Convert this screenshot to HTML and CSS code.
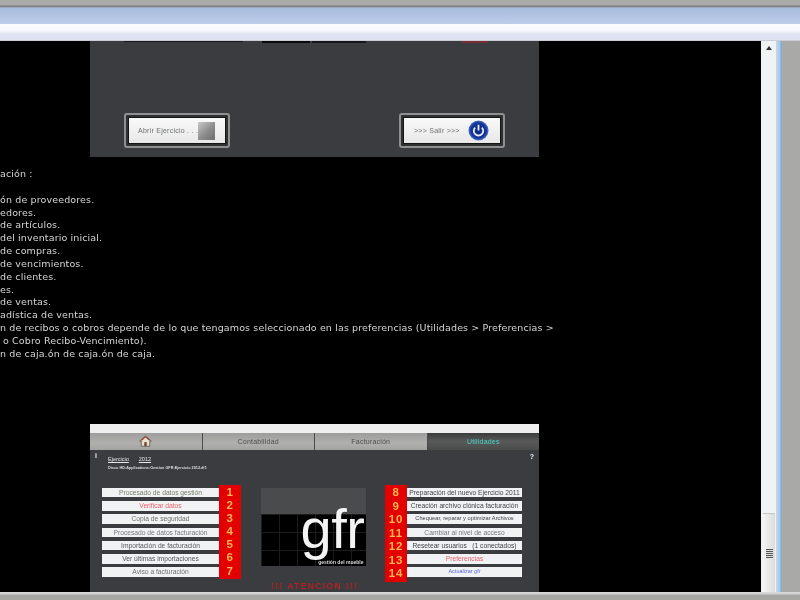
FILE: index.html
```html
<!DOCTYPE html>
<html lang="es">
<head>
<meta charset="utf-8">
<title>gfr</title>
<link rel="stylesheet" href="styles.css">
</head>
<body>
<div class="app">
  <div class="chrome-top"></div>
  <div class="toolbar-blue"></div>
  <div class="toolbar-white"></div>
  <div class="middle">
    <main class="viewport">
      <section class="shot shot-one">
        <div class="residue">
          <span class="res res-a"></span><span class="res res-b"></span><span class="res res-c"></span><span class="res res-d"></span>
        </div>
        <div class="shot-actions">
          <div class="big-btn">
            <div class="big-inner"><span>Abrir Ejercicio . . .</span><i class="cube"></i></div>
          </div>
          <div class="big-btn">
            <div class="big-inner big-exit"><span>&gt;&gt;&gt; Salir &gt;&gt;&gt;</span>
              <svg class="power" viewBox="0 0 24 24" aria-hidden="true">
                <defs><radialGradient id="pw" cx="50%" cy="50%" r="55%"><stop offset="0" stop-color="#0d2a7a"/><stop offset=".7" stop-color="#16379a"/><stop offset="1" stop-color="#6f95e0"/></radialGradient></defs>
                <circle cx="12" cy="12" r="11.5" fill="url(#pw)"/>
                <path d="M8.2 8.6a5.4 5.4 0 1 0 7.6 0" fill="none" stroke="#e8eefc" stroke-width="2"/>
                <path d="M12 5.5v6.5" stroke="#e8eefc" stroke-width="2"/>
              </svg>
            </div>
          </div>
        </div>
      </section>

      <div class="notes">
        <p>ación :</p>
        <p>&nbsp;</p>
        <p>ón de proveedores.</p>
        <p>edores.</p>
        <p>de artículos.</p>
        <p>del inventario inicial.</p>
        <p>de compras.</p>
        <p>de vencimientos.</p>
        <p>de clientes.</p>
        <p>es.</p>
        <p>de ventas.</p>
        <p>adística de ventas.</p>
        <p>n de recibos o cobros depende de lo que tengamos seleccionado en las preferencias (Utilidades &gt; Preferencias &gt;</p>
        <p class="ind">o Cobro Recibo-Vencimiento).</p>
        <p>n de caja.ón de caja.ón de caja.</p>
      </div>

      <section class="shot shot-two">
        <div class="titlebar"></div>
        <nav class="tabs">
          <div class="tab">
            <svg class="home" viewBox="0 0 16 14" aria-hidden="true">
              <path d="M8 .8 .8 7h2v6.4h10.4V7h2z" fill="#e9e2d2" stroke="#5b4a3a" stroke-width=".9"/>
              <path d="M3 6.2 8 2l5 4.2" fill="none" stroke="#9a3b25" stroke-width="1.4"/>
              <rect x="6.5" y="8.4" width="3" height="5" fill="#6b4a30"/>
            </svg>
          </div>
          <div class="tab">Contabilidad</div>
          <div class="tab">Facturación</div>
          <div class="tab tab-active">Utilidades</div>
        </nav>
        <div class="util">
          <div class="util-head">
            <span class="info">i</span>
            <div class="meta">
              <div class="meta-year"><u>Ejercicio</u><u>2012</u></div>
              <div class="meta-path">Disco HD:Applications:Gestion GFR:Ejercicio 2012.df1</div>
            </div>
            <span class="help">?</span>
          </div>
          <div class="util-grid">
            <div class="col-left">
              <div class="rows">
                <div class="row t-green">Procesado de datos gestión</div>
                <div class="row t-red">Verificar datos</div>
                <div class="row t-grey">Copia de seguridad</div>
                <div class="row t-slate">Procesado de datos facturación</div>
                <div class="row t-dark">Importación de facturación</div>
                <div class="row t-dark">Ver últimas importaciones</div>
                <div class="row t-grey">Aviso a facturación</div>
              </div>
              <div class="nums">
                <b>1</b><b>2</b><b>3</b><b>4</b><b>5</b><b>6</b><b>7</b>
              </div>
            </div>
            <div class="logo">
              <div class="logo-top"></div>
              <div class="logo-bottom"><small>gestión del mueble</small></div>
              <div class="logo-word">gfr</div>
            </div>
            <div class="col-right">
              <div class="nums nums-r">
                <b>8</b><b>9</b><b>10</b><b>11</b><b>12</b><b>13</b><b>14</b>
              </div>
              <div class="rows rows-r">
                <div class="row t-ink">Preparación del nuevo Ejercicio 2011</div>
                <div class="row t-ink">Creación archivo clónica facturación</div>
                <div class="row t-ink t-tiny">Chequear, reparar y optimizar Archivos</div>
                <div class="row t-slate">Cambiar al nivel de acceso</div>
                <div class="row t-ink">Resetear usuarios &nbsp; (1 conectados)</div>
                <div class="row t-red">Preferencias</div>
                <div class="row t-blue">Actualizar gfr</div>
              </div>
            </div>
          </div>
          <div class="warn">!!! ATENCION !!!</div>
        </div>
      </section>
    </main>
    <aside class="scrollbar">
      <span class="arrow"></span>
      <div class="thumb"><span class="grip"></span></div>
    </aside>
    <div class="edge"></div>
    <div class="gutter"></div>
  </div>
  <div class="chrome-bottom"></div>
</div>
</body>
</html>
```

FILE: styles.css
```css
* { box-sizing: border-box; }
html, body { margin: 0; height: 100%; overflow: hidden; }
body { background: #000; font-family: "Liberation Sans", Arial, sans-serif; }

.app { width: 800px; height: 600px; display: flex; flex-direction: column; }

.chrome-top { height: 8px; flex: none; background: linear-gradient(#aaaba6 0, #aaaba6 5px, #77787e 6px, #8f9098 7px, #a9bddc 8px); }
.toolbar-blue { height: 16px; flex: none; background: linear-gradient(#a7bcdc, #b4c6e4 60%, #bccdea); }
.toolbar-white { height: 17px; flex: none; background: linear-gradient(#fbfcff, #f6f7fc 40%, #e0e3f1 60%, #dfe2f0 92%, #bfc0c6); }

.middle { flex: 1; min-height: 0; display: flex; }
.viewport { width: 761px; flex: none; background: #000; overflow: hidden; display: flex; flex-direction: column; }

.shot { width: 449px; margin-left: 90px; flex: none; background: #3a3c3f; filter: blur(.4px); }

.shot-one { height: 116px; display: flex; flex-direction: column; justify-content: space-between; }
.residue { height: 2px; position: relative; }
.res { position: absolute; top: 0; height: 2px; }
.res-a { left: 34px; width: 119px; height: 1px; background: #15161a; }
.res-b { left: 172px; width: 48px; background: #08090b; }
.res-c { left: 222px; width: 54px; background: #15161a; }
.res-d { left: 372px; width: 26px; background: #7a2c36; }

.shot-actions { display: flex; justify-content: space-between; padding: 0 34px 9px; }
.big-btn { width: 106px; height: 35px; border: 2px solid #8e9092; border-radius: 3px; background: #2f3032; padding: 2px; }
.big-inner { height: 100%; background: linear-gradient(#f9f9f9, #e8e8e8); border: 1px solid #141517; display: flex; align-items: center; justify-content: space-between; padding: 0 14px 0 9px; font-size: 7px; letter-spacing: .25px; color: #6c6e71; white-space: nowrap; }
.big-exit { padding: 0 11px 0 10px; }
.cube { width: 17px; height: 18px; flex: none; background: linear-gradient(135deg, #c9c9c9, #8c8c8c 55%, #6d6d6d); }
.power { width: 21px; height: 21px; flex: none; }

.notes { margin: 11px 0 63px; flex: none; color: #d6d6d6; font-family: "DejaVu Sans", sans-serif; font-size: 9.5px; letter-spacing: .13px; line-height: 12.85px; white-space: nowrap; filter: blur(.3px); }
.notes p { margin: 0; }
.notes .ind { padding-left: 3px; }

.shot-two { height: 168px; display: flex; flex-direction: column; overflow: hidden; }
.titlebar { height: 9px; flex: none; background: #efefef; }
.tabs { height: 17px; flex: none; display: grid; grid-template-columns: repeat(4, 1fr); gap: 1px; background: #4a4b4d; }
.tab { display: flex; align-items: center; justify-content: center; background: linear-gradient(#9c9d9c, #b0b1ae 60%, #a3a4a2); color: #4d4e4e; font-size: 7px; letter-spacing: .2px; }
.tab-active { background: linear-gradient(#3b3c3c, #59595a 50%, #4a4b4b); color: #49d6c4; }
.home { width: 13px; height: 12px; }

.util { flex: 1; min-height: 0; display: flex; flex-direction: column; }
.util-head { height: 35px; flex: none; display: flex; padding: 2px 5px 0; color: #eee; }
.info { width: 12px; font-size: 7px; font-weight: 700; }
.meta { flex: 1; padding: 4px 0 0 1px; }
.meta-year { display: flex; gap: 10px; font-size: 5.5px; color: #e8e8e8; }
.meta-path { font-size: 3.8px; margin-top: 4px; font-weight: 700; color: #ddd; }
.help { font-size: 7px; font-weight: 700; padding-top: 1px; }

.util-grid { height: 94px; flex: none; display: flex; justify-content: space-between; padding: 0 17px 0 12px; align-items: flex-start; }
.col-left, .col-right { display: flex; }
.col-left { width: 139px; }
.col-right { width: 137px; }
.rows { width: 117px; padding-top: 3px; display: flex; flex-direction: column; gap: 3.7px; }
.rows-r { width: 115px; }
.row { height: 9.6px; background: #f1f2f3; font-size: 6.7px; line-height: 9.6px; text-align: center; white-space: nowrap; overflow: hidden; }
.nums { width: 22px; height: 94px; background: #e40000; display: flex; flex-direction: column; justify-content: space-around; align-items: center; padding: 1px 0; }
.nums-r { height: 97px; flex: none; }
.nums b { font-size: 11.5px; line-height: 13px; color: #ffb64a; letter-spacing: .8px; }

.t-green { color: #72806a; }
.t-red { color: #ea5f6a; }
.t-grey { color: #6d6f6f; }
.t-slate { color: #75797e; }
.t-dark { color: #53565a; }
.t-ink { color: #3f4247; }
.t-tiny { font-size: 5.7px; }
.t-blue { color: #5a63d8; font-size: 5.5px; }

.logo { width: 105px; height: 78px; margin-top: 3px; position: relative; background: #000; overflow: hidden; }
.logo-top { height: 26px; background: #4a4b4c; }
.logo-bottom { height: 52px; position: relative; background-color: #000; background-image: linear-gradient(#1c1c1c 1px, transparent 1px), linear-gradient(90deg, #1c1c1c 1px, transparent 1px); background-size: 18px 18px; }
.logo-bottom small { position: absolute; right: 2px; bottom: 1px; font-size: 5px; color: #d8d8d8; font-weight: 700; }
.logo-word { position: absolute; left: 40px; top: 6px; color: #f4f4f4; font-size: 56px; line-height: 70px; letter-spacing: -.5px; }

.warn { height: 10px; margin: 2px 0 0 181px; color: #b3211f; font-size: 8.5px; line-height: 10px; font-weight: 700; letter-spacing: 1.4px; white-space: nowrap; }

.scrollbar { width: 15px; flex: none; background: #f1f2f4; display: flex; flex-direction: column; justify-content: space-between; align-items: center; filter: blur(.3px); }
.arrow { margin-top: 5px; width: 0; height: 0; border-left: 3px solid transparent; border-right: 3px solid transparent; border-bottom: 4px solid #333; }
.thumb { width: 12px; height: 79px; background: linear-gradient(90deg, #f4f4f4, #dcdcdc); border-top: 1px solid #c4c4c4; display: flex; align-items: center; justify-content: center; margin-left: 1px; }
.grip { width: 7px; height: 9px; background: repeating-linear-gradient(#555 0 1px, #ddd 1px 2px); }
.edge { width: 6px; flex: none; background: linear-gradient(90deg, #c2d9ee, #a9cbe8 60%, #7ea3c4); }
.gutter { flex: 1; background: #a9aaa8; }

.chrome-bottom { height: 8px; flex: none; background: linear-gradient(#d8d9d9 0, #d0d1d0 2px, #a6a7a5 3px, #a6a7a5); }
```
